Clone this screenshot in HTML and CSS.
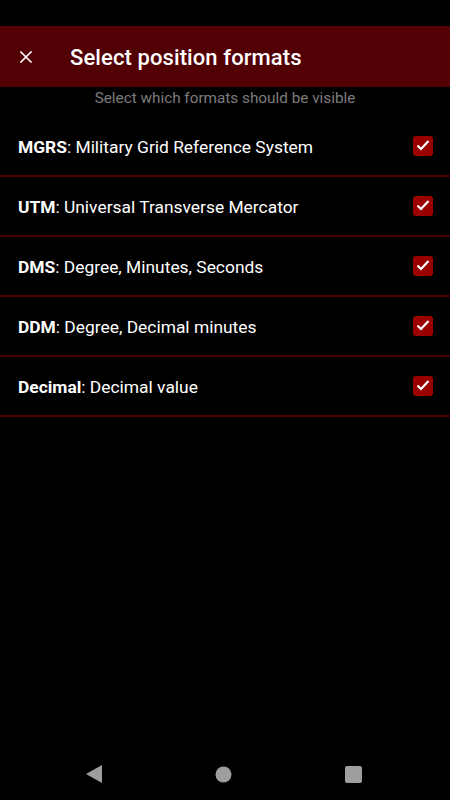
FILE: index.html
```html
<!DOCTYPE html>
<html>
<head>
<meta charset="utf-8">
<link rel="stylesheet" href="styles.css">
</head>
<body>
<div class="screen">
  <div class="status"></div>
  <header class="appbar">
    <svg class="close" width="12" height="12" viewBox="0 0 12 12"><path d="M1 1L11 11M11 1L1 11" stroke="#fff" stroke-width="1.6" stroke-linecap="square"/></svg>
    <h1 class="title">Select position formats</h1>
  </header>
  <p class="subtitle">Select which formats should be visible</p>
  <ul class="list">
    <li class="row"><span class="label"><b>MGRS</b>: Military Grid Reference System</span><span class="check"><svg width="14" height="12" viewBox="0 0 14 12"><path d="M1.5 6.5L5 10L12.5 2" fill="none" stroke="#fff" stroke-width="2.2"/></svg></span></li>
    <li class="row"><span class="label"><b>UTM</b>: Universal Transverse Mercator</span><span class="check"><svg width="14" height="12" viewBox="0 0 14 12"><path d="M1.5 6.5L5 10L12.5 2" fill="none" stroke="#fff" stroke-width="2.2"/></svg></span></li>
    <li class="row"><span class="label"><b>DMS</b>: Degree, Minutes, Seconds</span><span class="check"><svg width="14" height="12" viewBox="0 0 14 12"><path d="M1.5 6.5L5 10L12.5 2" fill="none" stroke="#fff" stroke-width="2.2"/></svg></span></li>
    <li class="row"><span class="label"><b>DDM</b>: Degree, Decimal minutes</span><span class="check"><svg width="14" height="12" viewBox="0 0 14 12"><path d="M1.5 6.5L5 10L12.5 2" fill="none" stroke="#fff" stroke-width="2.2"/></svg></span></li>
    <li class="row"><span class="label"><b>Decimal</b>: Decimal value</span><span class="check"><svg width="14" height="12" viewBox="0 0 14 12"><path d="M1.5 6.5L5 10L12.5 2" fill="none" stroke="#fff" stroke-width="2.2"/></svg></span></li>
  </ul>
  <div class="spacer"></div>
  <nav class="navbar">
    <svg width="16" height="18" viewBox="0 0 16 18"><path d="M16 0V18L0 9Z" fill="#9e9e9e"/></svg>
    <svg width="17" height="17" viewBox="0 0 17 17"><circle cx="8.5" cy="8.5" r="8" fill="#9e9e9e"/></svg>
    <svg width="17" height="17" viewBox="0 0 17 17"><rect x="0" y="0" width="17" height="17" rx="2" fill="#9e9e9e"/></svg>
  </nav>
</div>
</body>
</html>
```
FILE: styles.css
```css
* { box-sizing: border-box; }
html, body { margin: 0; padding: 0; background: #000; }
body { font-family: Roboto, "Noto Sans", sans-serif; color: #fff; }
.screen { width: 450px; height: 800px; display: flex; flex-direction: column; background: #000; }
.status { height: 26px; flex: none; }
.appbar { height: 61px; flex: none; background: #520004; display: flex; align-items: center; padding-left: 20px; }
.close { flex: none; }
.title { margin: 0 0 0 38px; padding-top: 2px; font-size: 22px; font-weight: 500; line-height: 26px; color: #fff; letter-spacing: 0.1px; }
.subtitle { margin: 0; height: 30px; text-align: center; font-size: 15.3px; line-height: 22px; color: #7c7c7c; }
.list { list-style: none; margin: 0; padding: 0; }
.row { height: 60px; display: flex; align-items: center; justify-content: space-between; padding: 0 17px 0 18px; border-bottom: 2px solid #4a0000; }
.label { font-size: 17.4px; line-height: 20px; color: #fff; padding-top: 2px; }
.label b { font-weight: 700; }
.check { width: 20px; height: 20px; border-radius: 3px; background: #9a0000; display: flex; align-items: center; justify-content: center; padding-bottom: 2px; }
.spacer { flex: 1; }
.navbar { height: 48px; flex: none; display: flex; align-items: center; justify-content: space-between; padding: 0 88px 0 86px; margin-bottom: 2px; }
```
